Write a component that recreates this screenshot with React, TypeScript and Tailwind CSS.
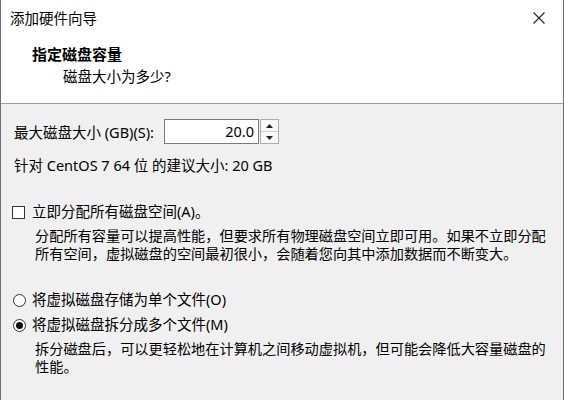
import React from 'react';

const font = "font-['Noto_Sans','Noto_Sans_CJK_SC',sans-serif]";

const Radio: React.FC<{ checked?: boolean; label: string }> = ({ checked, label }) => (
  <div className="flex h-[20px] items-center">
    <span className="ml-[12px] flex h-[13px] w-[13px] items-center justify-center rounded-full border border-[#333] bg-white">
      {checked && <span className="h-[7px] w-[7px] rounded-full bg-[#111]" />}
    </span>
    <span className="ml-[6px]">{label}</span>
  </div>
);

export default function App() {
  return (
    <div className={`${font} flex h-[400px] w-[564px] flex-col border-x border-[#6f6f6f] bg-[#f0f0f0] text-[14.5px] text-black`}>
      {/* header */}
      <div className="h-[104px] border-b border-[#a0a0a0] bg-white">
        <div className="flex h-[36px] items-center justify-between pl-[9px] pr-[18px]">
          <span className="leading-[20px]">添加硬件向导</span>
          <svg width="12" height="12" viewBox="0 0 12 12" className="text-[#222]">
            <path d="M0.5 0.5 L11.5 11.5 M11.5 0.5 L0.5 11.5" stroke="currentColor" strokeWidth="1.1" fill="none" />
          </svg>
        </div>
        <div className="mt-[7px] pl-[31px] text-[15px] font-bold leading-[22px]">指定磁盘容量</div>
        <div className="pl-[62px] leading-[22px]">磁盘大小为多少?</div>
      </div>

      {/* body */}
      <div className="flex flex-col">
        <div className="mt-[15px] flex h-[25px] items-center pl-[13px]">
          <span className="w-[150px] leading-[20px]">最大磁盘大小 (GB)(S):</span>
          <div className="flex h-[25px] w-[95px] items-center justify-end border border-[#7a7a7a] bg-white pr-[4px]">
            <span>20.0</span>
          </div>
          <div className="ml-[1px] flex h-[25px] w-[19px] flex-col border border-[#adadad] bg-[#f7f7f7]">
            <div className="flex flex-1 items-center justify-center border-b border-[#cfcfcf]">
              <svg width="7" height="4" viewBox="0 0 7 4">
                <path d="M0 4 L3.5 0 L7 4 Z" fill="#222" />
              </svg>
            </div>
            <div className="flex flex-1 items-center justify-center">
              <svg width="7" height="4" viewBox="0 0 7 4">
                <path d="M0 0 L7 0 L3.5 4 Z" fill="#222" />
              </svg>
            </div>
          </div>
        </div>

        <div className="mt-[11px] pl-[13px] leading-[20px]">针对 CentOS 7 64 位 的建议大小: 20 GB</div>

        <div className="mt-[27px] flex h-[20px] items-center">
          <span className="ml-[11px] h-[13px] w-[13px] border border-[#333] bg-white" />
          <span className="ml-[7px]">立即分配所有磁盘空间(A)。</span>
        </div>
        <div className="mt-[5px] whitespace-nowrap pl-[34px] text-[14.2px] leading-[18px]">
          分配所有容量可以提高性能，但要求所有物理磁盘空间立即可用。如果不立即分配
          <br />
          所有空间，虚拟磁盘的空间最初很小，会随着您向其中添加数据而不断变大。
        </div>

        <div className="mt-[27px]">
          <Radio label="将虚拟磁盘存储为单个文件(O)" />
        </div>
        <div className="mt-[5px]">
          <Radio checked label="将虚拟磁盘拆分成多个文件(M)" />
        </div>
        <div className="mt-[5px] whitespace-nowrap pl-[34px] text-[14.2px] leading-[18px]">
          拆分磁盘后，可以更轻松地在计算机之间移动虚拟机，但可能会降低大容量磁盘的
          <br />
          性能。
        </div>
      </div>
    </div>
  );
}
